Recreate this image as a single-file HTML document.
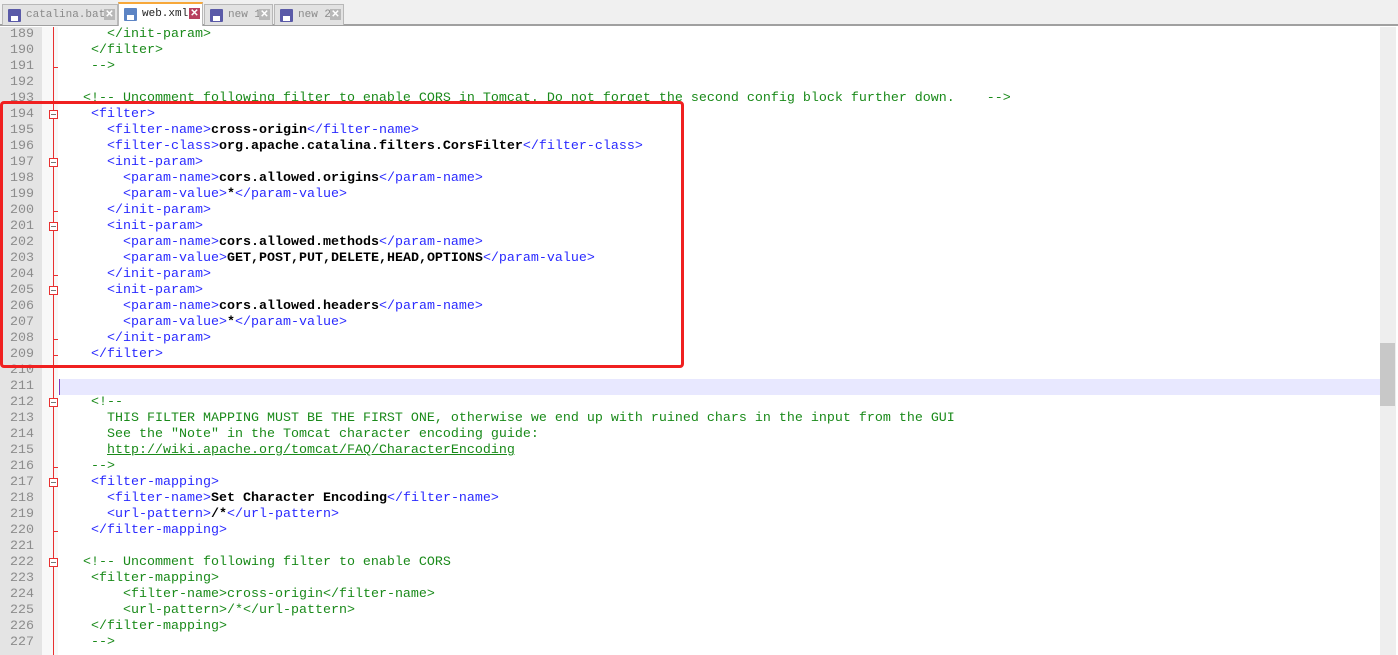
<!DOCTYPE html>
<html><head><meta charset="utf-8"><style>
*{margin:0;padding:0;box-sizing:border-box}
body{width:1398px;height:655px;background:#fff;position:relative;overflow:hidden;font-family:"Liberation Mono",monospace}
#tabs{position:absolute;left:0;top:0;width:1398px;height:26px;background:#f0f0f0;border-bottom:2px solid #a0a0a0}
.tab{position:absolute;top:4px;height:21px;background:#e2e2e2;border:1px solid #b8b8b8;border-bottom:none;font-size:11px;color:#8a8a8a;line-height:20px;padding-left:23px;white-space:nowrap;overflow:hidden}
.tab.act{top:2px;height:24px;background:#fff;color:#222;border-top:2px solid #f7a83a;line-height:21px}
.ic{position:absolute;left:5px;top:4px;width:13px;height:13px;background:#5a5aa8;border-radius:1px}
.act .ic{background:#5c84c4}
.ic:after{content:"";position:absolute;left:3px;top:7px;width:7px;height:5px;background:#fff}
.x{position:absolute;right:2px;top:4px;width:11px;height:11px;background:#b8b8b8;color:#fff;font-size:10px;line-height:11px;text-align:center;font-family:"Liberation Sans",sans-serif;font-weight:bold}
.act .x{background:#b84060}
#gut{position:absolute;left:0;top:27px;width:42px;height:628px;background:#e4e4e4}
#fold{position:absolute;left:42px;top:27px;width:16px;height:628px;background:#f8f8f8}
#fline{position:absolute;left:53px;top:27px;width:1px;height:628px;background:#e83030}
.fb{position:absolute;left:49px;width:9px;height:9px;border:1px solid #e83030;background:#fff}
.fb:after{content:"";position:absolute;left:1px;top:3px;width:5px;height:1px;background:#777}
.ft{position:absolute;left:54px;width:4px;height:1px;background:#e83030}
.ln{position:absolute;left:0;width:34px;text-align:right;font-size:13.33px;color:#8c8c8c;height:16px;line-height:16px}
.l{position:absolute;left:59px;height:16px;line-height:16px;font-size:13.33px;white-space:pre;color:#000}
.t{color:#2a2aff}.c{color:#1a8a1a}.b{font-weight:bold;color:#000}
.u{text-decoration:underline}
#cur{position:absolute;left:59px;top:379px;width:1321px;height:16px;background:#e8e8ff}
#caret{position:absolute;left:59px;top:379px;width:1px;height:16px;background:#8040c0}
#sb{position:absolute;left:1380px;top:27px;width:16px;height:628px;background:#eeeeee}
#thumb{position:absolute;left:1380px;top:343px;width:15px;height:63px;background:#c8c8c8}
#red{position:absolute;left:0;top:101px;width:684px;height:267px;border:3px solid #f02020;border-radius:4px}
</style></head><body>
<div id="tabs">
<div class="tab" style="left:2px;width:116px"><span class="ic"></span>catalina.bat<span class="x">✕</span></div>
<div class="tab act" style="left:118px;width:85px"><span class="ic"></span>web.xml<span class="x">✕</span></div>
<div class="tab" style="left:204px;width:69px"><span class="ic"></span>new 1<span class="x">✕</span></div>
<div class="tab" style="left:274px;width:70px"><span class="ic"></span>new 2<span class="x">✕</span></div>
</div>
<div id="gut"></div><div id="fold"></div><div id="fline"></div>
<div id="cur"></div><div id="caret"></div>
<div id="sb"></div><div id="thumb"></div>
<div id="lines"></div>
<div id="red"></div>
<script>
var T=(s)=>'<span class="t">'+s.replace(/</g,'&lt;')+'</span>';
var C=(s)=>'<span class="c">'+s.replace(/</g,'&lt;')+'</span>';
var B=(s)=>'<span class="b">'+s+'</span>';
var sp=n=>' '.repeat(n);
var L={
189:sp(6)+C('</init-param>'),190:sp(4)+C('</filter>'),191:sp(4)+C('-->'),192:'',
193:sp(3)+C('<!-- Uncomment following filter to enable CORS in Tomcat. Do not forget the second config block further down.    -->'),
194:sp(4)+T('<filter>'),195:sp(6)+T('<filter-name>')+B('cross-origin')+T('</filter-name>'),
196:sp(6)+T('<filter-class>')+B('org.apache.catalina.filters.CorsFilter')+T('</filter-class>'),
197:sp(6)+T('<init-param>'),198:sp(8)+T('<param-name>')+B('cors.allowed.origins')+T('</param-name>'),
199:sp(8)+T('<param-value>')+B('*')+T('</param-value>'),200:sp(6)+T('</init-param>'),
201:sp(6)+T('<init-param>'),202:sp(8)+T('<param-name>')+B('cors.allowed.methods')+T('</param-name>'),
203:sp(8)+T('<param-value>')+B('GET,POST,PUT,DELETE,HEAD,OPTIONS')+T('</param-value>'),204:sp(6)+T('</init-param>'),
205:sp(6)+T('<init-param>'),206:sp(8)+T('<param-name>')+B('cors.allowed.headers')+T('</param-name>'),
207:sp(8)+T('<param-value>')+B('*')+T('</param-value>'),208:sp(6)+T('</init-param>'),209:sp(4)+T('</filter>'),
210:'',211:'',212:sp(4)+C('<!--'),
213:sp(6)+C('THIS FILTER MAPPING MUST BE THE FIRST ONE, otherwise we end up with ruined chars in the input from the GUI'),
214:sp(6)+C('See the "Note" in the Tomcat character encoding guide:'),
215:sp(6)+'<span class="c u">http://wiki.apache.org/tomcat/FAQ/CharacterEncoding</span>',
216:sp(4)+C('-->'),217:sp(4)+T('<filter-mapping>'),218:sp(6)+T('<filter-name>')+B('Set Character Encoding')+T('</filter-name>'),
219:sp(6)+T('<url-pattern>')+B('/*')+T('</url-pattern>'),220:sp(4)+T('</filter-mapping>'),221:'',
222:sp(3)+C('<!-- Uncomment following filter to enable CORS'),223:sp(4)+C('<filter-mapping>'),
224:sp(8)+C('<filter-name>cross-origin</filter-name>'),225:sp(8)+C('<url-pattern>/*</url-pattern>'),
226:sp(4)+C('</filter-mapping>'),227:sp(4)+C('-->')};
var h='';
for(var n=189;n<=227;n++){var y=27+(n-189)*16;
h+='<div class="ln" style="top:'+y+'px">'+n+'</div><div class="l" style="top:'+y+'px">'+L[n]+'</div>';
if([194,197,201,205,212,217,222].indexOf(n)>=0)h+='<div class="fb" style="top:'+(y+3)+'px"></div>';
if([191,200,204,208,209,216,220].indexOf(n)>=0)h+='<div class="ft" style="top:'+(y+8)+'px"></div>';}
document.getElementById('lines').innerHTML=h;
</script>
</body></html>
